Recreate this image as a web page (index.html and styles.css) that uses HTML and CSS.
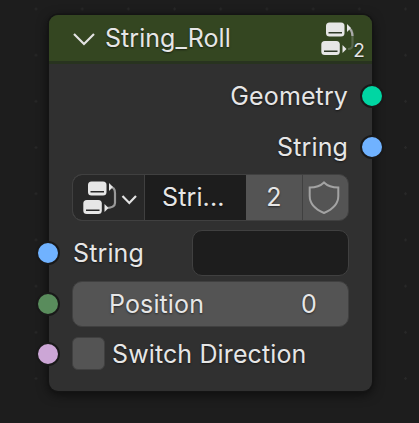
FILE: index.html
```html
<!DOCTYPE html>
<html lang="en">
<head>
<meta charset="utf-8">
<title>String_Roll</title>
<link rel="stylesheet" href="styles.css">
</head>
<body>
<main class="node">
  <header class="header">
    <svg class="chevron" width="22" height="14" viewBox="0 0 22 14"><path d="M1 2 L11 12 L21 2"/></svg>
    <h1 class="title">String_Roll</h1>
    <div class="group-icon">
      <svg width="34" height="34" viewBox="0 0 34 34">
        <path class="wire faint" d="M27 6 Q31.500 7 31.500 12 V23 Q31.500 27 27 27"/>
        <path class="wire" d="M27 6 Q31 7 31.500 14"/>
        <path class="fill" d="M26 2 L30 6 L26 10 Z M21.500 23 L25.500 27 L21.500 31 Z"/>
        <rect class="fill" x="5" y="0.500" width="18.500" height="14" rx="3.500"/>
        <rect class="fill" x="0.300" y="19" width="18.500" height="14" rx="3.500"/>
        <path class="slot" d="M7.500 10.800 H21 M3 29.300 H16.500"/>
      </svg>
      <span class="users">2</span>
    </div>
  </header>
  <section class="body">
    <div class="row output"><span>Geometry</span><i class="socket geometry"></i></div>
    <div class="row output"><span>String</span><i class="socket string"></i></div>
    <div class="selector">
      <button class="browse">
        <svg width="56" height="34" viewBox="0 0 56 34">
          <path class="wire dim" d="M27 6 Q32 6 32 12 V22 Q32 27 22 27"/>
          <path class="fill" d="M26 2 L30 6 L26 10 Z M21.500 23 L25.500 27 L21.500 31 Z"/>
          <rect class="fill" x="5" y="0.500" width="18.500" height="14" rx="3.500"/>
          <rect class="fill" x="0.300" y="19" width="18.500" height="14" rx="3.500"/>
          <path class="slot" d="M7.500 10.800 H21 M3 29.300 H16.500"/>
          <path class="arrow" d="M39.500 15 L46.300 22 L53 15"/>
        </svg>
      </button>
      <span class="name">Stri...</span>
      <span class="count">2</span>
      <span class="shield">
        <svg width="32" height="34" viewBox="0 0 32 34"><path d="M16 1.500 Q11 6.500 1.700 6.500 V15 Q1.700 26 16 32 Q30.300 26 30.300 15 V6.500 Q21 6.500 16 1.500 Z"/></svg>
      </span>
    </div>
    <div class="row string-row"><i class="socket string"></i><span>String</span><span class="field"></span></div>
    <div class="row position-row"><i class="socket integer"></i><div class="slider"><span>Position</span><span>0</span></div></div>
    <div class="row switch-row"><i class="socket boolean"></i><span class="check"></span><span>Switch Direction</span></div>
  </section>
</main>
</body>
</html>
```
FILE: styles.css
```css
* { box-sizing: border-box; }
body {
  margin: 0;
  height: 423px;
  padding: 15px 47px 0 49px;
  overflow: hidden;
  background: #1d1d1d radial-gradient(circle at 1.5px 1.5px, #282828 1px, transparent 1.500px) 34.500px 7.500px / 46.200px 46.200px;
  color: #e6e6e6;
  font: 400 25px/30px Inter, sans-serif;
  letter-spacing: .12px;
  text-shadow: 0 1px 2px rgba(0, 0, 0, .55);
}
.node {
  width: 323px;
  height: 376px;
  border-radius: 9px;
  background: #303030;
  box-shadow: 0 0 0 1.500px #141414, 0 3px 12px rgba(0, 0, 0, .65);
}
.header {
  display: flex;
  align-items: center;
  height: 49px;
  padding: 0 17px 1px 24px;
  border-bottom: 3px solid #28331f;
  border-radius: 9px 9px 0 0;
  background: #344621;
}
.chevron { margin: 3px 10px 0 0; }
.chevron path, .arrow { fill: none; stroke: #e2e2e2; stroke-width: 2.200; }
.title { margin: 0; font: inherit; letter-spacing: .05px; }
.group-icon {
  position: relative;
  height: 34px;
  margin: 2px 0 0 auto;
}
.group-icon svg { display: block; }
.users {
  position: absolute;
  right: -10px;
  bottom: -7px;
  font-size: 19px;
  line-height: 24px;
}
.fill { fill: #e6e6e6; }
.wire { fill: none; stroke: #aaa; stroke-width: 2.200; }
.faint { stroke: #59674c; }
.dim { stroke: #999; }
.slot { fill: none; stroke: #303a28; stroke-width: 1.600; }
.browse .slot { stroke: #292929; }
.body { padding: 7px 23px 0 23px; }
.row {
  position: relative;
  display: flex;
  align-items: center;
  height: 51px;
}
.output { justify-content: flex-end; padding: 0 1px 2px 0; }
.socket {
  position: absolute;
  left: -36px;
  top: 14px;
  width: 24px;
  height: 24px;
  border: 2px solid #191919;
  border-radius: 50%;
}
.output .socket { left: auto; right: -35px; top: 13px; }
.geometry { background: #00d6a3; }
.string { background: #70b2ff; }
.integer { background: #598c5c; }
.boolean { background: #cca6d6; }
.selector {
  display: flex;
  width: 277px;
  height: 47px;
  margin-top: 1px;
  overflow: hidden;
  border: 1px solid #404040;
  border-radius: 10px;
  background: #545454;
}
.browse {
  width: 72px;
  padding: 0 0 0 10px;
  border: 0;
  border-right: 1px solid #404040;
  background: #282828;
  text-align: left;
}
.browse svg { display: block; }
.name {
  width: 101px;
  padding: 7px 0 0 17px;
  background: #1d1d1d;
}
.count {
  width: 57px;
  padding-top: 7px;
  border-right: 1px solid #404040;
  text-align: center;
}
.shield { padding: 6px 0 0 5px; }
.shield svg { display: block; }
.shield path { fill: none; stroke: #a3a3a3; stroke-width: 2; }
.string-row { margin-top: 6px; padding-left: 1px; }
.field {
  width: 157px;
  height: 46px;
  margin-left: auto;
  border: 1px solid #404040;
  border-radius: 10px;
  background: #1d1d1d;
}
.slider {
  display: flex;
  align-items: center;
  justify-content: space-between;
  width: 277px;
  height: 46px;
  padding: 0 31px 0 36px;
  border: 1px solid #404040;
  border-radius: 10px;
  background: #545454;
}
.switch-row { margin-top: -1px; }
.check {
  width: 33px;
  height: 33px;
  margin-right: 7px;
  border: 1px solid #404040;
  border-radius: 6px;
  background: #545454;
}
```
